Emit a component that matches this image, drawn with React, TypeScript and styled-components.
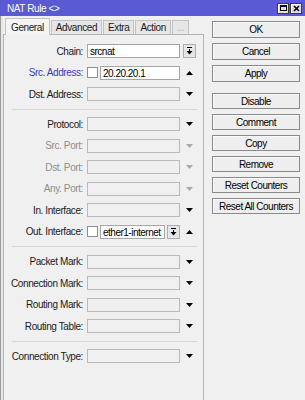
import React from 'react';
import styled, { createGlobalStyle } from 'styled-components';

type Tone = 'normal' | 'blue' | 'muted';

const GlobalStyle = createGlobalStyle`
  html, body {
    margin: 0;
    padding: 0;
    background: #f0f0f0;
  }
  body {
    font-family: "Liberation Sans", Arial, sans-serif;
    font-size: 10px;
    letter-spacing: -0.4px;
    color: #1a1a1a;
    overflow: hidden;
  }
`;

// Window frame
const Window = styled.div`
  width: 305px;
  height: 400px;
  display: flex;
  flex-direction: column;
  background: #f0f0f0;
  overflow: hidden;
`;

const TitleBar = styled.div`
  flex: none;
  height: 16px;
  background: #5a5ad4;
  color: #ffffff;
  display: flex;
  align-items: center;
  justify-content: space-between;
  padding: 0 3px 0 7px;
  font-size: 10px;
  letter-spacing: -0.4px;
`;

const TitleButtons = styled.div`
  display: flex;
  gap: 1px;
`;

const TitleButton = styled.div`
  width: 12px;
  height: 11px;
  box-sizing: border-box;
  border: 1px solid #3c3c3c;
  background: #dedede;
  box-shadow: inset 1px 1px 0 #ffffff;
  display: flex;
  align-items: center;
  justify-content: center;
  color: #000;
`;

const Body = styled.div`
  flex: 1;
  display: flex;
  min-height: 0;
`;

const LeftEdge = styled.div`
  width: 3px;
  box-sizing: border-box;
  border-left: 1px solid #9c9c9c;
  background: #e6e6e6;
`;

// Tabs and the tab page
const LeftPane = styled.div`
  width: 201px;
  display: flex;
  flex-direction: column;
`;

const TabStrip = styled.div`
  flex: none;
  height: 18px;
  display: flex;
  align-items: flex-end;
  padding-left: 2px;
`;

const Tab = styled.div<{ $active?: boolean; $dim?: boolean }>`
  position: relative;
  box-sizing: border-box;
  height: ${p => (p.$active ? 17 : 14)}px;
  margin-bottom: ${p => (p.$active ? -1 : 0)}px;
  padding: ${p => (p.$active ? '3px 5px 0' : '1px 4px 0')};
  border: 1px solid #c2c2c2;
  border-bottom: none;
  margin-left: ${p => (p.$active ? 0 : 1)}px;
  background: ${p => (p.$active ? '#f4f4f4' : '#e6e6e6')};
  color: ${p => (p.$dim ? '#b0b0b0' : '#1a1a1a')};
  z-index: ${p => (p.$active ? 1 : 0)};
  white-space: nowrap;
`;

const Panel = styled.div`
  flex: 1;
  box-sizing: border-box;
  border: 1px solid #b4b4b4;
  border-bottom: none;
  padding-top: 9px;
  display: flex;
  flex-direction: column;
  gap: 7.5px;
`;

const Row = styled.div`
  height: 14px;
  display: flex;
  align-items: center;
`;

const Label = styled.div<{ $tone?: Tone }>`
  width: 79px;
  margin-right: 4px;
  text-align: right;
  white-space: nowrap;
  color: ${p =>
    p.$tone === 'blue' ? '#3b3bcf' : p.$tone === 'muted' ? '#8e8e8e' : '#1a1a1a'};
`;

const Field = styled.div`
  width: 93px;
  height: 14px;
  display: flex;
  gap: 2px;
`;

const Input = styled.div<{ $filled?: boolean }>`
  flex: 1;
  height: 14px;
  box-sizing: border-box;
  border: 1px solid ${p => (p.$filled ? '#a6a6a6' : '#b9b9b9')};
  background: ${p => (p.$filled ? '#ffffff' : '#f0f0f0')};
  padding: 1px 0 0 2px;
  line-height: 11px;
  color: #000;
  letter-spacing: -0.5px;
  white-space: nowrap;
  overflow: hidden;
`;

const Check = styled.div`
  flex: none;
  width: 11px;
  height: 11px;
  margin-top: 1px;
  box-sizing: border-box;
  border: 1px solid #8e8e8e;
  background: #ffffff;
`;

const DropButton = styled.div`
  flex: none;
  width: 13px;
  height: 14px;
  box-sizing: border-box;
  border: 1px solid #adadad;
  background: #e6e6e6;
  display: flex;
  align-items: center;
  justify-content: center;
`;

const Trail = styled.div`
  width: 18px;
  display: flex;
  justify-content: center;
  align-items: center;
`;

const Separator = styled.div`
  height: 1px;
  margin: 0 6px 0 8px;
  background: #d6d6d6;
`;

// Action buttons
const RightPane = styled.div`
  width: 88px;
  margin-left: 8px;
  padding-top: 5px;
  display: flex;
  flex-direction: column;
`;

const ButtonGroup = styled.div<{ $gap: number }>`
  display: flex;
  flex-direction: column;
  gap: ${p => p.$gap}px;
`;

const Button = styled.div<{ $tall?: boolean }>`
  height: ${p => (p.$tall ? 17 : 16)}px;
  box-sizing: border-box;
  border: 1px solid #8a8a8a;
  background: #eeeeee;
  box-shadow: inset 1px 1px 0 #fafafa;
  display: flex;
  align-items: center;
  justify-content: center;
  color: #000;
  letter-spacing: -0.5px;
  white-space: nowrap;
`;

const Spacer = styled.div`
  height: 11px;
`;

const Arrow: React.FC<{ up?: boolean; muted?: boolean }> = ({ up, muted }) => (
  <svg width="7" height="4" viewBox="0 0 7 4">
    <path d={up ? 'M0 4H7L3.5 0Z' : 'M0 0H7L3.5 4Z'} fill={muted ? '#a9a9a9' : '#000'} />
  </svg>
);

const DropIcon = () => (
  <svg width="7" height="8" viewBox="0 0 7 8">
    <rect x="1" y="0" width="5" height="1" fill="#000" />
    <rect x="3" y="2" width="1" height="2" fill="#000" />
    <path d="M0.5 4H6.5L3.5 7.5Z" fill="#000" />
  </svg>
);

type Plain = { label: string; tone?: Tone; muted?: boolean };

const PlainRow: React.FC<Plain> = ({ label, tone, muted }) => (
  <Row>
    <Label $tone={tone}>{label}</Label>
    <Field>
      <Input />
    </Field>
    <Trail>
      <Arrow muted={muted} />
    </Trail>
  </Row>
);

const portRows: Plain[] = [
  { label: 'Protocol:' },
  { label: 'Src. Port:', tone: 'muted', muted: true },
  { label: 'Dst. Port:', tone: 'muted', muted: true },
  { label: 'Any. Port:', tone: 'muted', muted: true },
  { label: 'In. Interface:' },
];

const markRows: Plain[] = [
  { label: 'Packet Mark:' },
  { label: 'Connection Mark:' },
  { label: 'Routing Mark:' },
  { label: 'Routing Table:' },
];

const topButtons = ['OK', 'Cancel', 'Apply'];
const moreButtons = ['Disable', 'Comment', 'Copy', 'Remove', 'Reset Counters', 'Reset All Counters'];

export default function App() {
  return (
    <>
      <GlobalStyle />
      <Window>
        <TitleBar>
          <span>NAT Rule &lt;&gt;</span>
          <TitleButtons>
            <TitleButton>
              <svg width="7" height="6" viewBox="0 0 7 6">
                <rect x="0.5" y="0.5" width="6" height="5" fill="none" stroke="#000" />
                <rect x="0" y="0" width="7" height="2" fill="#000" />
              </svg>
            </TitleButton>
            <TitleButton>
              <svg width="7" height="7" viewBox="0 0 7 7">
                <path d="M1 1L6 6M6 1L1 6" stroke="#000" strokeWidth="1.6" />
              </svg>
            </TitleButton>
          </TitleButtons>
        </TitleBar>
        <Body>
          <LeftEdge />
          <LeftPane>
            <TabStrip>
              <Tab $active>General</Tab>
              <Tab>Advanced</Tab>
              <Tab>Extra</Tab>
              <Tab>Action</Tab>
              <Tab $dim>...</Tab>
            </TabStrip>
            <Panel>
              <Row>
                <Label>Chain:</Label>
                <Field>
                  <Input $filled>srcnat</Input>
                </Field>
                <Trail>
                  <DropButton>
                    <DropIcon />
                  </DropButton>
                </Trail>
              </Row>
              <Row>
                <Label $tone="blue">Src. Address:</Label>
                <Field>
                  <Check />
                  <Input $filled>20.20.20.1</Input>
                </Field>
                <Trail>
                  <Arrow up />
                </Trail>
              </Row>
              <PlainRow label="Dst. Address:" />
              <Separator />
              {portRows.map(r => (
                <PlainRow key={r.label} {...r} />
              ))}
              <Row>
                <Label>Out. Interface:</Label>
                <Field>
                  <Check />
                  <Input $filled>ether1-internet</Input>
                  <DropButton>
                    <DropIcon />
                  </DropButton>
                </Field>
                <Trail>
                  <Arrow up />
                </Trail>
              </Row>
              <Separator />
              {markRows.map(r => (
                <PlainRow key={r.label} {...r} />
              ))}
              <Separator />
              <PlainRow label="Connection Type:" />
            </Panel>
          </LeftPane>
          <RightPane>
            <ButtonGroup $gap={5}>
              {topButtons.map(b => (
                <Button key={b} $tall>
                  {b}
                </Button>
              ))}
            </ButtonGroup>
            <Spacer />
            <ButtonGroup $gap={5}>
              {moreButtons.map(b => (
                <Button key={b}>{b}</Button>
              ))}
            </ButtonGroup>
          </RightPane>
        </Body>
      </Window>
    </>
  );
}
